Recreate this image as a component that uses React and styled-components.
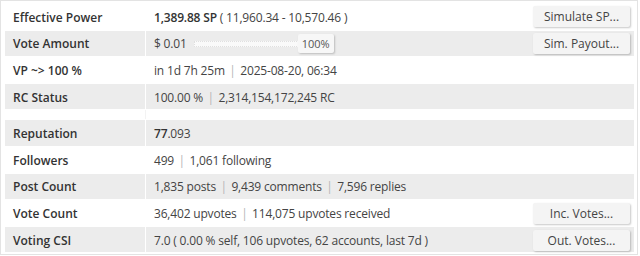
import React from "react";
import styled, { createGlobalStyle } from "styled-components";

const Global = createGlobalStyle`
  html, body { margin: 0; padding: 0; background: #fff; }
  body { font-family: "Open Sans", "Noto Sans", sans-serif; font-size: 12px; color: #333; }
`;

const Panel = styled.div`
  width: 638px;
  height: 255px;
  box-sizing: border-box;
  border: 1px solid #e3e3e3;
  padding: 3px 3px 1px 4px;
  display: flex;
  flex-direction: column;
`;

const Row = styled.div`
  display: flex;
  align-items: stretch;
  height: ${(p) => (p.$blank ? "10px" : "26.6px")};
  flex: none;
  box-sizing: border-box;
  border-bottom: 1px solid #fff;
  background: ${(p) => (p.$shade ? "#ececec" : "#fff")};
`;

const Label = styled.div`
  width: 141px;
  flex: none;
  box-sizing: border-box;
  padding-left: 8px;
  border-right: 1px solid ${(p) => (p.$blank ? "#f3f3f3" : "#fff")};
  display: flex;
  align-items: center;
  font-weight: 600;
  font-size: 12px;
  color: #333;
  padding-top: 1px;
`;

const Value = styled.div`
  flex: 1;
  display: flex;
  align-items: center;
  padding-left: 8px;
  padding-right: 4px;
  padding-top: 1px;
  white-space: pre;
  letter-spacing: -0.18px;
  color: #444;
`;

const Strong = styled.span`
  font-weight: 600;
  color: #333;
`;

const Sep = styled.span`
  color: #b5b5b5;
  margin: 0 4.5px;
`;

const Spacer = styled.div`
  flex: 1;
`;

const ActionButton = styled.button`
  width: 97px;
  height: 21px;
  box-sizing: border-box;
  border: none;
  border-radius: 2px;
  background: #f4f4f4;
  box-shadow: 1px 1px 2px rgba(0, 0, 0, 0.22);
  font-family: "Open Sans", "Noto Sans", sans-serif;
  font-size: 12px;
  letter-spacing: 0;
  color: #444;
  padding: 0;
  margin-top: ${(p) => p.$mt || "-1px"};
  cursor: pointer;
`;

const Track = styled.div`
  width: 105px;
  height: 6px;
  margin-left: 7px;
  box-sizing: border-box;
  border: 1px dotted #e0e0e0;
  background: #fafafa;
`;

const Handle = styled.div`
  width: 36px;
  height: 19px;
  box-sizing: border-box;
  background: #f7f7f7;
  border-radius: 2px;
  box-shadow: 1px 1px 2px rgba(0, 0, 0, 0.2);
  display: flex;
  align-items: center;
  justify-content: center;
  font-size: 11px;
  letter-spacing: 0;
  color: #555;
  margin-left: -1px;
`;

const Line = ({ label, shade, children }) => (
  <Row $shade={shade}>
    <Label>{label}</Label>
    <Value>{children}</Value>
  </Row>
);

export default function App() {
  return (
    <>
      <Global />
      <Panel>
        <Line label="Effective Power">
          <Strong>1,389.88 SP</Strong>
          {" ( 11,960.34 - 10,570.46 )"}
          <Spacer />
          <ActionButton>Simulate SP...</ActionButton>
        </Line>
        <Line label="Vote Amount" shade>
          {"$ 0.01"}
          <Track />
          <Handle>100%</Handle>
          <Spacer />
          <ActionButton>Sim. Payout...</ActionButton>
        </Line>
        <Line label="VP ~> 100 %">
          in 1d 7h 25m<Sep>|</Sep>2025-08-20, 06:34
        </Line>
        <Line label="RC Status" shade>
          100.00 %<Sep>|</Sep>2,314,154,172,245 RC
        </Line>
        <Row $blank>
          <Label $blank />
          <Value />
        </Row>
        <Line label="Reputation" shade>
          <Strong>77</Strong>.093
        </Line>
        <Line label="Followers">
          499<Sep>|</Sep>1,061 following
        </Line>
        <Line label="Post Count" shade>
          1,835 posts<Sep>|</Sep>9,439 comments<Sep>|</Sep>7,596 replies
        </Line>
        <Line label="Vote Count">
          36,402 upvotes<Sep>|</Sep>114,075 upvotes received
          <Spacer />
          <ActionButton $mt="1px">Inc. Votes...</ActionButton>
        </Line>
        <Line label="Voting CSI" shade>
          {"7.0 ( 0.00 % self, 106 upvotes, 62 accounts, last 7d )"}
          <Spacer />
          <ActionButton $mt="1px">Out. Votes...</ActionButton>
        </Line>
      </Panel>
    </>
  );
}
